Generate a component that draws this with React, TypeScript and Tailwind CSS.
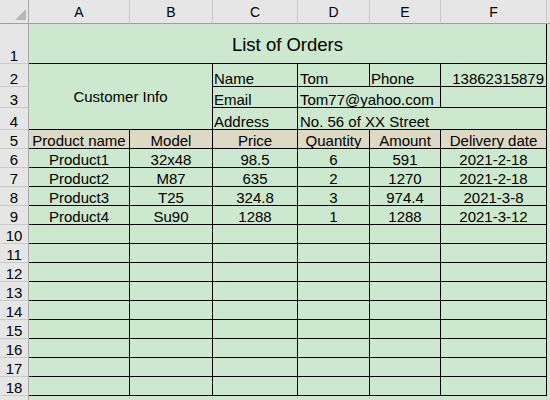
import React from "react";

const orders = [
  ["Product1", "32x48", "98.5", "6", "591", "2021-2-18"],
  ["Product2", "M87", "635", "2", "1270", "2021-2-18"],
  ["Product3", "T25", "324.8", "3", "974.4", "2021-3-8"],
  ["Product4", "Su90", "1288", "1", "1288", "2021-3-12"],
];

const headers = ["Product name", "Model", "Price", "Quantity", "Amount", "Delivery date"];
const letters = ["A", "B", "C", "D", "E", "F"];

const base =
  "flex overflow-hidden whitespace-nowrap border-r border-b border-black bg-[#cce8cf] text-black";
const cell = `${base} items-end text-[15px] leading-[15px]`;
const rowHead =
  "flex items-end justify-center border-r border-b border-r-[#a9a9a9] border-b-[#c9c9c9] bg-[#e6e6e6] text-[15px] leading-[15px] text-black";
const extra = "bg-[#cce8cf]";

function RowHead({ n }: { n: number }) {
  return <div className={rowHead}>{n}</div>;
}

export default function App() {
  const emptyRows = Array.from({ length: 9 }, (_, i) => i + 10);

  return (
    <div className="h-[400px] w-[550px] overflow-hidden bg-white font-['Liberation_Sans',Arial,sans-serif]">
      <div className="grid h-full grid-cols-[29px_101px_83px_85px_72px_71px_106px_1fr] grid-rows-[24px_40px_23px_21px_22px_repeat(14,19px)_1fr]">
        {/* Column headers */}
        <div className="relative border-r border-b border-r-[#a9a9a9] border-b-[#a0a0a0] bg-[#e6e6e6]">
          <svg className="absolute left-[15px] top-[9px]" width="11" height="11" viewBox="0 0 11 11">
            <polygon points="11,0 11,11 0,11" fill="#b6b6b6" />
          </svg>
        </div>
        {letters.map((l) => (
          <div
            key={l}
            className="flex items-center justify-center border-r border-b border-r-[#c8c8c8] border-b-[#a0a0a0] bg-[#e6e6e6] pt-[1px] text-[14px] text-black"
          >
            {l}
          </div>
        ))}
        <div className="border-b border-b-[#a0a0a0] bg-[#e6e6e6]" />

        {/* Row 1: title */}
        <RowHead n={1} />
        <div className={`${base} col-span-6 items-center justify-center pt-[2px] text-[18.5px] leading-[19px]`}>
          List of Orders
        </div>
        <div className={extra} />

        {/* Row 2 */}
        <RowHead n={2} />
        <div className={`${base} col-span-2 row-span-3 items-center justify-center text-[15px] leading-[15px]`}>
          Customer Info
        </div>
        <div className={`${cell} pl-[1px]`}>Name</div>
        <div className={`${cell} pl-[2px]`}>Tom</div>
        <div className={`${cell} pl-[1px]`}>Phone</div>
        <div className={`${cell} justify-end pr-[2px]`}>13862315879</div>
        <div className={extra} />

        {/* Row 3 */}
        <RowHead n={3} />
        <div className={`${cell} pl-[1px]`}>Email</div>
        <div className={`${cell} col-span-2 pl-[2px]`}>Tom77@yahoo.com</div>
        <div className={cell} />
        <div className={extra} />

        {/* Row 4 */}
        <RowHead n={4} />
        <div className={`${cell} pl-[1px]`}>Address</div>
        <div className={`${cell} col-span-3 pl-[2px]`}>No. 56 of XX Street</div>
        <div className={extra} />

        {/* Row 5: table header */}
        <RowHead n={5} />
        {headers.map((h) => (
          <div key={h} className={`${cell} justify-center bg-[#ddd9c4]`}>
            {h}
          </div>
        ))}
        <div className={extra} />

        {/* Orders */}
        {orders.map((row, i) => (
          <React.Fragment key={row[0]}>
            <RowHead n={i + 6} />
            {row.map((v, j) => (
              <div key={j} className={`${cell} justify-center`}>
                {v}
              </div>
            ))}
            <div className={extra} />
          </React.Fragment>
        ))}

        {/* Empty rows */}
        {emptyRows.map((n) => (
          <React.Fragment key={n}>
            <RowHead n={n} />
            {letters.map((l) => (
              <div key={l} className={cell} />
            ))}
            <div className={extra} />
          </React.Fragment>
        ))}

        {/* Row 19, cut off */}
        <div className="border-r border-r-[#a9a9a9] bg-[#e6e6e6]" />
        {letters.map((l) => (
          <div key={l} className="border-r border-r-[#c4d9c6] bg-[#cce8cf]" />
        ))}
        <div className={extra} />
      </div>
    </div>
  );
}
